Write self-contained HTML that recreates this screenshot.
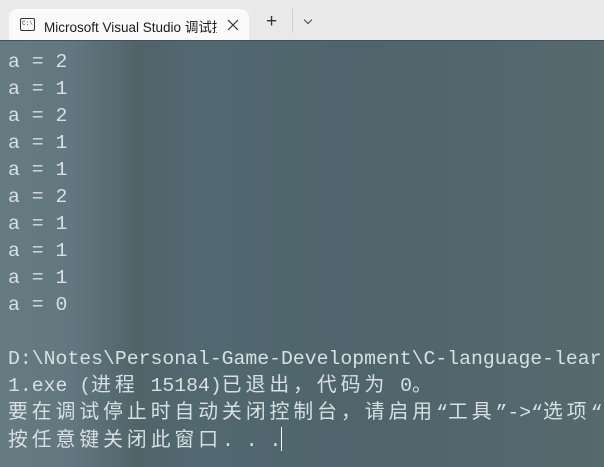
<!DOCTYPE html>
<html><head><meta charset="utf-8"><style>
*{margin:0;padding:0;box-sizing:border-box}
body{width:604px;height:467px;overflow:hidden;background:#e9e9e9;position:relative;font-family:"Liberation Sans","Noto Sans CJK SC",sans-serif}
.tab{position:absolute;left:9px;top:9px;width:240px;height:32px;background:#fafafa;border-radius:8px 8px 0 0}
.tab .t{position:absolute;left:35px;top:7px;font-size:13.5px;color:#1a1a1a;white-space:nowrap;width:173px;overflow:hidden}
.tab svg{position:absolute;left:218px;top:10px}
.icon{position:absolute;left:11px;top:9px;width:15px;height:13px;border:1.3px solid #333;border-radius:2px;font-size:6px;line-height:9px;text-align:center;font-family:"Liberation Mono",monospace;color:#333}
.plus{position:absolute;left:266px;top:11px;font-size:19px;color:#333;font-weight:300}
.sep{position:absolute;left:292px;top:9px;width:1px;height:24px;background:#d0d0d0}
.chev{position:absolute;left:305px;top:17px;width:6px;height:6px;border-right:1.2px solid #444;border-bottom:1.2px solid #444;transform:rotate(45deg)}
.con{position:absolute;left:0;top:40px;width:604px;height:427px;overflow:hidden;background:linear-gradient(90deg,#667a81 0px,#637780 70px,#506369 140px,#526870 200px,#4f646b 350px,#55696f 604px);border-top:1px solid #3f5258}
pre{position:absolute;left:8px;top:8px;font-family:"Liberation Mono","Noto Sans CJK SC",monospace;font-size:19.8px;line-height:27px;color:#d7e0e3;white-space:pre}
.w{letter-spacing:4px}
.cur{display:inline-block;width:1px;height:24px;background:#fff;vertical-align:-5px}
</style></head><body>
<div class="tab"><div class="icon">C:\</div><div class="t">Microsoft Visual Studio 调试控制台</div><svg width="12" height="12" viewBox="0 0 12 12"><path d="M1 1L11 11M11 1L1 11" stroke="#333" stroke-width="1.2"/></svg></div>
<div class="plus">+</div><div class="sep"></div><div class="chev"></div>
<div class="con"><pre>a = 2
a = 1
a = 2
a = 1
a = 1
a = 2
a = 1
a = 1
a = 1
a = 0

D:\Notes\Personal-Game-Development\C-language-lear
1.exe (<span class="w">进程</span> 15184)<span class="w">已退出，代码为</span> 0<span class="w">。</span>
<span class="w">要在调试停止时自动关闭控制台，请启用</span>“<span class="w">工具</span>”->“<span class="w">选项</span>“
<span class="w">按任意键关闭此窗口</span>. . .<span class="cur"></span></pre></div>
</body></html>
